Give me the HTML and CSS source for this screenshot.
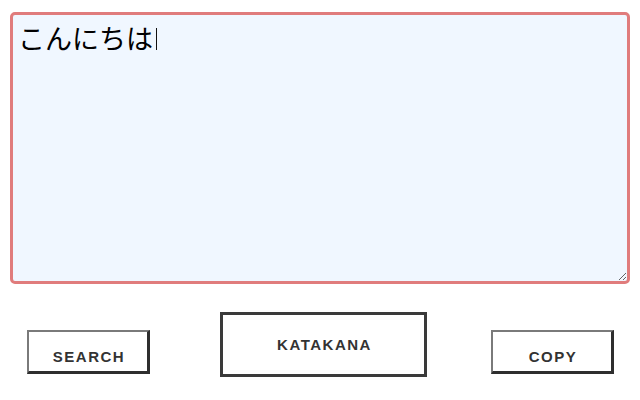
FILE: index.html
```html
<!DOCTYPE html>
<html lang="ja">
<head>
<meta charset="utf-8">
<title>Kana</title>
<link rel="stylesheet" href="styles.css">
</head>
<body>
<main class="app">
  <div class="editor-wrap">
    <textarea class="editor">こんにちは</textarea>
    <span class="caret"></span>
  </div>
  <div class="actions">
    <button class="btn btn-small btn-search">SEARCH</button>
    <button class="btn btn-big">KATAKANA</button>
    <button class="btn btn-small btn-copy">COPY</button>
  </div>
</main>
</body>
</html>
```

FILE: styles.css
```css
html, body {
  margin: 0;
  padding: 0;
  background: #ffffff;
}

.app {
  display: flex;
  flex-direction: column;
  padding: 12px 10px 0 10px;
}

.editor-wrap {
  position: relative;
  width: 620px;
  height: 272px;
}

.editor {
  box-sizing: border-box;
  display: block;
  width: 620px;
  height: 272px;
  margin: 0;
  padding: 5px 5px;
  border: 3px solid #e07c7c;
  border-radius: 5px;
  background: #f0f7ff;
  font-family: "Noto Sans CJK JP", "Noto Sans", sans-serif;
  font-size: 27px;
  line-height: 36px;
  color: #000000;
  outline: none;
}

.caret {
  position: absolute;
  left: 146px;
  top: 16px;
  width: 1px;
  height: 22px;
  background: #111111;
}

.actions {
  display: flex;
  align-items: flex-start;
  margin-top: 28px;
  padding-left: 17px;
}

.btn {
  box-sizing: border-box;
  background: #ffffff;
  color: #333333;
  font-family: "Liberation Sans", Arial, sans-serif;
  font-weight: bold;
  font-size: 15px;
  letter-spacing: 1.5px;
  line-height: 16px;
  margin: 0;
  cursor: pointer;
}

.btn-small {
  width: 123px;
  height: 44px;
  margin-top: 18px;
  padding: 17px 0 7px 2px;
  border-style: solid;
  border-width: 2px 3px 3px 2px;
  border-color: #7a7a7a #2e2e2e #2e2e2e #7a7a7a;
}

.btn-big {
  width: 207px;
  height: 65px;
  margin-left: 70px;
  padding: 0 0 0 2px;
  border: 3px solid #3a3a3a;
}

.btn-copy {
  margin-left: 64px;
}
```
